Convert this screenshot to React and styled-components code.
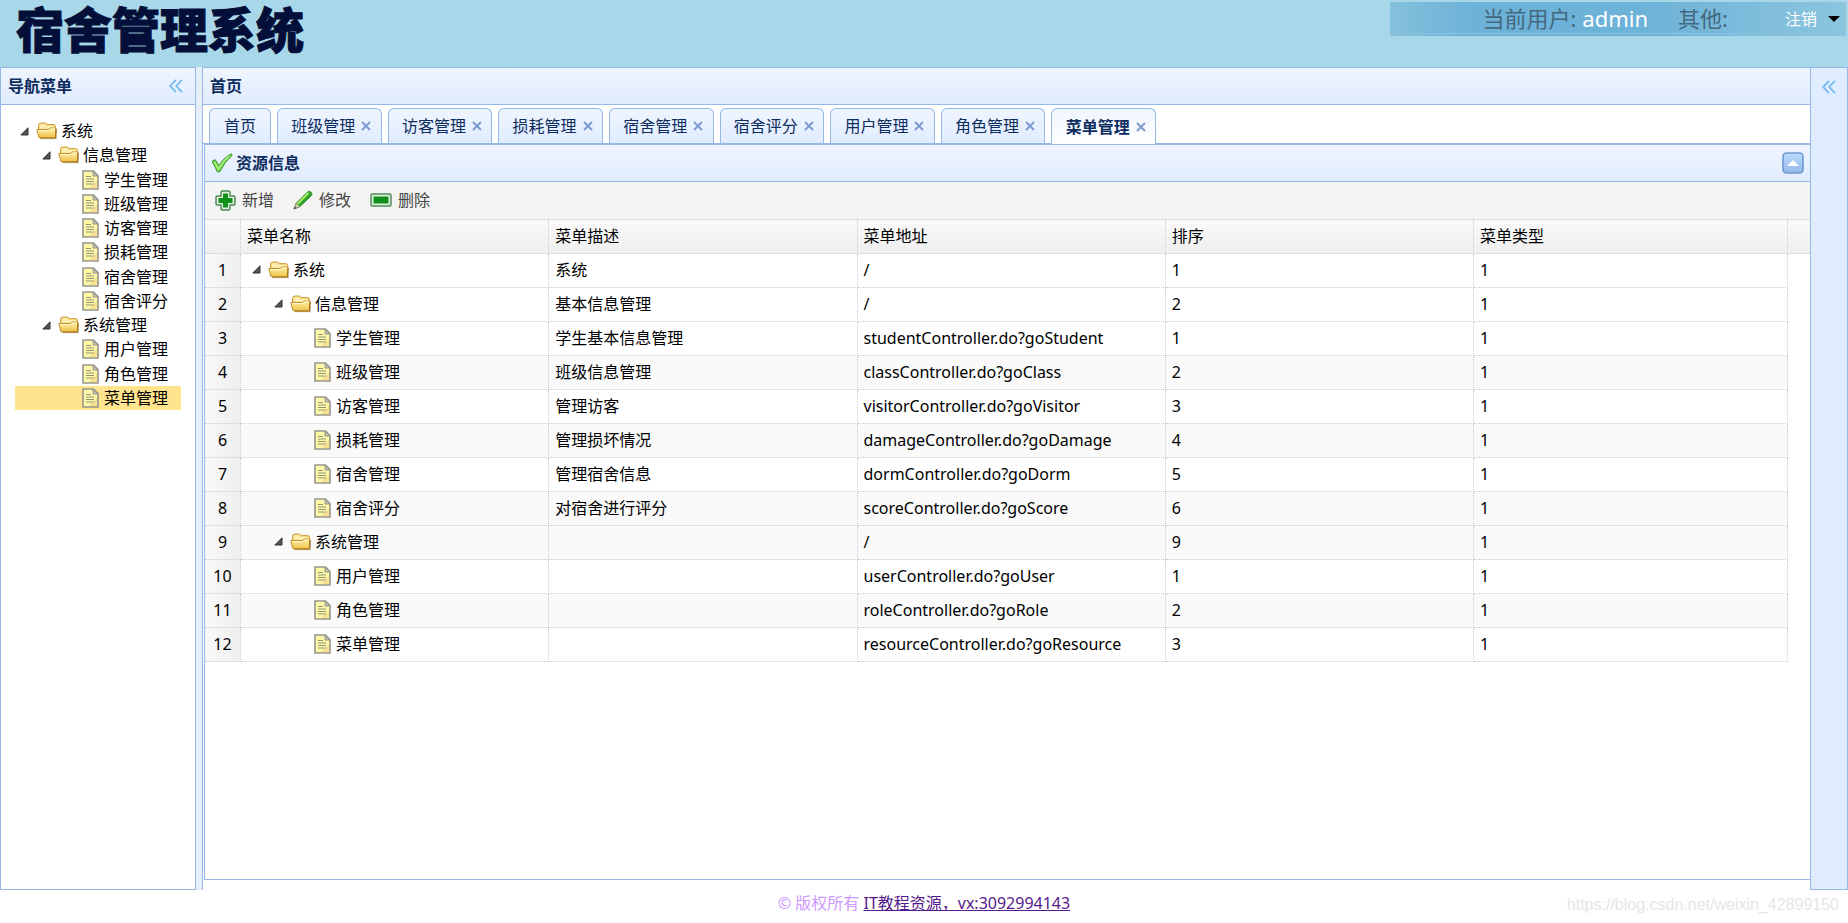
import React, { useState } from "react";
import styled, { createGlobalStyle, css } from "styled-components";

const line = "#95b8e7";
const navy = "#0e2d5f";
const sans = '"Noto Sans", "Noto Sans CJK SC", sans-serif';

const GlobalStyle = createGlobalStyle`
  * { box-sizing: border-box; }
  html, body, #root { height: 100%; }
  body { margin: 0; background: #fff; color: #000; font: 16px/24px ${sans}; }
  button { font: inherit; color: inherit; background: none; border: 0; padding: 0; cursor: pointer; }
  ul { list-style: none; margin: 0; padding: 0; }
`;

const Page = styled.div`
  min-height: 100%;
  display: flex;
  flex-direction: column;
`;

const Header = styled.header`
  height: 67px;
  flex: none;
  display: flex;
  justify-content: space-between;
  background: #a8d7e9;
`;

const Logo = styled.h1`
  margin: 0;
  padding: 0 16px;
  font-size: 48px;
  line-height: 60px;
  font-weight: 900;
  color: #030f38;
  -webkit-text-stroke: 1px #030f38;
`;

const UserBar = styled.div`
  width: 456px;
  height: 34px;
  margin: 2px 2px 0 0;
  padding-right: 6px;
  display: flex;
  justify-content: flex-end;
  align-items: flex-start;
  line-height: 32px;
  font-size: 22px;
  color: #44697f;
  white-space: pre;
  background:
    linear-gradient(#8cc4e0, #8cc4e0) 0 31px / 100% 1px no-repeat,
    linear-gradient(90deg, #84c1dc 0, #6db2d8 18%, #6db2d8 55%, #8bc5de 100%);
`;

const UserName = styled.span`
  color: #fff;
  margin: 0 30px 0 6px;
`;

const Logout = styled.button`
  display: flex;
  align-items: center;
  gap: 11px;
  height: 34px;
  margin-left: 57px;
  && { color: #fff; font-size: 16px; }
`;

const Body = styled.div`
  flex: 1;
  display: flex;
`;

const West = styled.aside`
  width: 196px;
  flex: none;
  border: 1px solid ${line};
`;

const Splitter = styled.div`
  width: 6px;
  flex: none;
  background: #e6eef8;
`;

const Center = styled.main`
  flex: 1;
  min-width: 0;
  display: flex;
  flex-direction: column;
  border: solid ${line};
  border-width: 1px 0 0 1px;
  padding-bottom: 10px;
`;

const East = styled.aside`
  width: 38px;
  flex: none;
  border: 1px solid ${line};
  background: #e0ecff;
  display: flex;
  justify-content: center;
  align-items: flex-start;
  padding: 12px 2px 0;
`;

const PanelHeader = styled.div`
  height: 37px;
  flex: none;
  display: flex;
  align-items: center;
  gap: 3px;
  padding: ${(p) => (p.$inner ? "0 6px" : "0 12px 0 7px")};
  border-bottom: 1px solid ${line};
  background: linear-gradient(#eff5ff, #e0ecff);
  color: ${navy};
`;

const PanelTitle = styled.h2`
  margin: 0;
  flex: 1;
  font-size: 16px;
  line-height: 24px;
  font-weight: 700;
`;

const IconButton = styled.button`
  display: flex;
`;

const Tree = styled.ul`
  margin: 14px;
  height: 291px;
  display: grid;
  grid-auto-rows: 1fr;
`;

const TreeItem = styled.li`
  display: flex;
  align-items: center;
  padding-left: ${(p) => p.$indent}px;
  background: ${(p) => (p.$selected ? "#ffe48d" : "transparent")};
  white-space: nowrap;
`;

const Node = styled.span`
  display: flex;
  align-items: center;
  padding-left: ${(p) => p.$indent}px;
`;

const NodeIcon = styled.span`
  display: flex;
  width: ${(p) => p.$w}px;
  flex: none;
`;

const TabStrip = styled.div`
  flex: none;
  padding: 3px 0 0 6px;
  height: 39px;
  border-bottom: 1px solid ${line};
`;

const Tabs = styled.div`
  width: 947px;
  display: flex;
  gap: 6px;
`;

const Tab = styled.div`
  flex: ${(p) => (p.$fixed ? "none" : "1 1 0")};
  width: ${(p) => (p.$fixed ? "62px" : "auto")};
  height: ${(p) => (p.$active ? 36 : 35)}px;
  padding-left: ${(p) => (p.$fixed ? 0 : 4)}px;
  display: flex;
  align-items: center;
  justify-content: center;
  gap: 6px;
  border: 1px solid ${line};
  border-bottom: 0;
  border-radius: 6px 6px 0 0;
  background: linear-gradient(#eff5ff, ${(p) => (p.$active ? "#fff" : "#e0ecff")});
  color: ${navy};
  white-space: nowrap;
  ${(p) => p.$active && css`font-weight: 700;`}
`;

const Panel = styled.section`
  flex: 1;
  margin-left: 1px;
  border: solid ${line};
  border-width: 1px 0 1px 1px;
`;

const Toolbar = styled.div`
  height: 38px;
  display: flex;
  align-items: center;
  gap: 19px;
  padding: 0 10px 1px;
  background: #f4f4f4;
  border-bottom: 1px solid #ddd;
`;

const Tool = styled.button`
  display: flex;
  align-items: center;
  gap: 6px;
  && { color: #444; }
`;

const Grid = styled.table`
  width: 100%;
  table-layout: fixed;
  border-collapse: separate;
  border-spacing: 0;
`;

const Col = styled.col`
  width: ${(p) => (p.$w ? `${p.$w}px` : "auto")};
`;

const HeadCell = styled.th`
  height: 34px;
  padding: 0 6px 2px;
  text-align: left;
  font-weight: 400;
  background: linear-gradient(#f9f9f9, #efefef);
  border-bottom: 1px solid #ddd;
  border-right: ${(p) => (p.$last ? "0" : "1px dotted #ccc")};
`;

const Cell = styled.td`
  height: 34px;
  padding: 0 6px 2px;
  white-space: nowrap;
  background: ${(p) => (p.$striped ? "#fafafa" : "#fff")};
  border: dotted #ccc;
  border-width: 0 1px 1px 0;
`;

const NumberCell = styled(Cell)`
  text-align: center;
  background: linear-gradient(90deg, #f9f9f9, #efefef);
`;

const Footer = styled.footer`
  height: 33px;
  flex: none;
  display: grid;
  grid-template-columns: 1fr auto 1fr;
  align-items: start;
  line-height: 26px;
  color: #cc99ff;
`;

const Copyright = styled.span`
  grid-column: 2;
  a { color: #551a8b; }
`;

const SiteAddress = styled.span`
  justify-self: end;
  padding-right: 9px;
  font: 16px/30px "Liberation Sans", sans-serif;
  color: #e6e6e6;
`;

const Arrows = () => (
  <svg width="14" height="14" viewBox="0 0 14 14" fill="none" stroke="#74b9ef" strokeWidth="1.8" aria-hidden="true">
    <path d="M7 .8 1.2 7 7 13.2M13 .8 7.2 7 13 13.2" />
  </svg>
);

const Expander = () => (
  <svg width="9" height="9" viewBox="0 0 9 9" aria-hidden="true">
    <path d="M8 .8V8H.8z" fill="#555" stroke="#333" strokeLinejoin="round" />
  </svg>
);

const Folder = () => (
  <svg width="22" height="18" viewBox="0 0 22 18" aria-hidden="true">
    <defs>
      <linearGradient id="folder" x2="0" y2="1">
        <stop stopColor="#fff3a8" />
        <stop offset="1" stopColor="#eebf4a" />
      </linearGradient>
    </defs>
    <path d="M4 17.200h17V7H5z" fill="#888" opacity=".4" />
    <path d="M2.500 15V3.200Q2.500 1 5 1h4q1.600 0 2.200 1.500H17q2.500 0 2.500 2V15z" fill="#f6d87c" stroke="#cfa044" />
    <path d="M4 6.500V3.500Q4 2.300 5.500 2.300H8.500q1.200 0 1.600 1.700H18v3z" fill="#fdeeb4" />
    <path d="M.8 7.500h11.700l1.500-1.500h6l-.5 10H4.500Q3 16 2.500 14z" fill="url(#folder)" stroke="#c2902c" strokeLinejoin="round" />
    <path d="M2.300 8.500h10.700l1.500-1.500h4.500" fill="none" stroke="#fffbd6" />
    <path d="M4.500 16h15l.5-9" fill="none" stroke="#a87518" strokeWidth="1.200" />
  </svg>
);

const FileIcon = () => (
  <svg width="17" height="20" viewBox="0 0 17 20" aria-hidden="true">
    <path d="M1 1h10.500L16 5.500V19H1z" fill="#fdf9a4" stroke="#96968e" strokeWidth="1.600" />
    <path d="M15 10v8H7z" fill="#f7cf86" opacity=".6" />
    <path d="M11 1.500V6h4.500z" fill="#c9c9bf" stroke="#96968e" />
    <path d="M4 6.500h5M4 9h8M4 11.500h8M4 14h8" stroke="#94947c" strokeWidth="1.200" />
  </svg>
);

const CloseIcon = () => (
  <svg width="10" height="10" viewBox="0 0 10 10" stroke="#7d9bd0" strokeWidth="2" aria-hidden="true">
    <path d="m1 1 8 8M9 1 1 9" />
  </svg>
);

const Check = () => (
  <svg width="22" height="20" viewBox="0 0 22 20" aria-hidden="true">
    <path d="M1 8.500 4 6.500 8 12.500Q13 4 20.500.8L21 2.500Q13.500 9 9 18.500 7.500 19.500 6 18.500 3.500 12 1 8.500Z" fill="#6fd545" stroke="#3c9a3a" />
    <path d="M3.500 9 7.500 16Q12 8 18 3" fill="none" stroke="#b4f08e" strokeWidth="1.500" />
  </svg>
);

const AddIcon = () => (
  <svg width="21" height="21" viewBox="0 0 21 21" aria-hidden="true">
    <path d="M7 1h7l1 1v4h4l1 1v7l-1 1h-4v4l-1 1H7l-1-1v-4H2l-1-1V7l1-1h4V2z" fill="#e3f1e0" stroke="#4d8956" strokeWidth="1.500" />
    <path d="M8 3.500h5V8h4.500v5H13v4.500H8V13H3.500V8H8z" fill="#109018" />
  </svg>
);

const EditIcon = () => (
  <svg width="20" height="20" viewBox="0 0 20 20" aria-hidden="true">
    <path d="M1 19 3 13.500 14 2.500Q15.500.8 17 1.500L18.800 3Q19.500 4 18 6L7 16.500z" fill="#2fa526" stroke="#3b8c3a" strokeLinejoin="round" />
    <path d="M4.500 14 15.500 3" stroke="#a6ec68" strokeWidth="2" />
    <path d="M1 19 3 13.500 7 16.500z" fill="#d8d2b4" stroke="#7d8d74" strokeWidth=".7" />
    <path d="m1 19 1-2.500L3.500 18z" fill="#444" />
  </svg>
);

const RemoveIcon = () => (
  <svg width="22" height="14" viewBox="0 0 22 14" aria-hidden="true">
    <rect x="1" y="1" width="20" height="12" rx="1.500" fill="#e3f1e0" stroke="#4d8956" strokeWidth="1.500" />
    <path d="M3.500 3.500h15v7h-15z" fill="#109018" />
  </svg>
);

const CollapseIcon = () => (
  <svg width="22" height="22" viewBox="0 0 22 22" aria-hidden="true">
    <defs>
      <linearGradient id="collapse" x2="0" y2="1">
        <stop stopColor="#bcd9fb" />
        <stop offset="1" stopColor="#94b8ec" />
      </linearGradient>
    </defs>
    <rect x="1" y="1" width="20" height="20" rx="3.500" fill="url(#collapse)" stroke="#6e9ad2" strokeWidth="1.600" />
    <path d="M5 14h12l-6-6z" fill="#fff" />
  </svg>
);

const Caret = () => (
  <svg width="12" height="6" viewBox="0 0 12 6" aria-hidden="true">
    <path d="M0 0h12L6 6z" />
  </svg>
);

const resources = [
  [0, "系统", "系统", "/", 1],
  [1, "信息管理", "基本信息管理", "/", 2],
  [2, "学生管理", "学生基本信息管理", "studentController.do?goStudent", 1],
  [2, "班级管理", "班级信息管理", "classController.do?goClass", 2],
  [2, "访客管理", "管理访客", "visitorController.do?goVisitor", 3],
  [2, "损耗管理", "管理损坏情况", "damageController.do?goDamage", 4],
  [2, "宿舍管理", "管理宿舍信息", "dormController.do?goDorm", 5],
  [2, "宿舍评分", "对宿舍进行评分", "scoreController.do?goScore", 6],
  [1, "系统管理", "", "/", 9],
  [2, "用户管理", "", "userController.do?goUser", 1],
  [2, "角色管理", "", "roleController.do?goRole", 2],
  [2, "菜单管理", "", "resourceController.do?goResource", 3],
];

const striped = [4, 6, 8, 9, 11];
const tabNames = ["首页", "班级管理", "访客管理", "损耗管理", "宿舍管理", "宿舍评分", "用户管理", "角色管理", "菜单管理"];
const indents = [5, 27, 67];

const NodeContent = ({ level, label }) =>
  level < 2 ? (
    <>
      <NodeIcon $w={16}><Expander /></NodeIcon>
      <NodeIcon $w={25}><Folder /></NodeIcon>
      <span>{label}</span>
    </>
  ) : (
    <>
      <NodeIcon $w={22}><FileIcon /></NodeIcon>
      <span>{label}</span>
    </>
  );

export default function App() {
  const [active, setActive] = useState("菜单管理");
  return (
    <Page>
      <GlobalStyle />
      <Header>
        <Logo>宿舍管理系统</Logo>
        <UserBar>
          <span>当前用户:</span>
          <UserName>admin</UserName>
          <span>其他:</span>
          <Logout type="button">注销<Caret /></Logout>
        </UserBar>
      </Header>
      <Body>
        <West>
          <PanelHeader>
            <PanelTitle>导航菜单</PanelTitle>
            <IconButton type="button" aria-label="折叠"><Arrows /></IconButton>
          </PanelHeader>
          <Tree>
            {resources.map(([level, label]) => (
              <TreeItem key={label} $indent={indents[level]} $selected={label === active}>
                <NodeContent level={level} label={label} />
              </TreeItem>
            ))}
          </Tree>
        </West>
        <Splitter />
        <Center>
          <PanelHeader>
            <PanelTitle>首页</PanelTitle>
          </PanelHeader>
          <TabStrip>
            <Tabs>
              {tabNames.map((name, i) => (
                <Tab key={name} $fixed={i === 0} $active={name === active}>
                  <button type="button" onClick={() => setActive(name)}>{name}</button>
                  {i > 0 && <IconButton type="button" aria-label={`关闭${name}`}><CloseIcon /></IconButton>}
                </Tab>
              ))}
            </Tabs>
          </TabStrip>
          <Panel>
            <PanelHeader $inner>
              <Check />
              <PanelTitle>资源信息</PanelTitle>
              <IconButton type="button" aria-label="收起"><CollapseIcon /></IconButton>
            </PanelHeader>
            <Toolbar>
              <Tool type="button"><AddIcon />新增</Tool>
              <Tool type="button"><EditIcon />修改</Tool>
              <Tool type="button"><RemoveIcon />删除</Tool>
            </Toolbar>
            <Grid>
              <colgroup>
                <Col $w={36} />
                <Col /><Col /><Col /><Col />
                <Col $w={314} />
                <Col $w={22} />
              </colgroup>
              <thead>
                <tr>
                  <HeadCell />
                  <HeadCell>菜单名称</HeadCell>
                  <HeadCell>菜单描述</HeadCell>
                  <HeadCell>菜单地址</HeadCell>
                  <HeadCell>排序</HeadCell>
                  <HeadCell>菜单类型</HeadCell>
                  <HeadCell $last />
                </tr>
              </thead>
              <tbody>
                {resources.map(([level, label, note, url, order], i) => {
                  const s = striped.includes(i + 1);
                  return (
                    <tr key={label}>
                      <NumberCell>{i + 1}</NumberCell>
                      <Cell $striped={s}>
                        <Node $indent={indents[level]}><NodeContent level={level} label={label} /></Node>
                      </Cell>
                      <Cell $striped={s}>{note}</Cell>
                      <Cell $striped={s}>{url}</Cell>
                      <Cell $striped={s}>{order}</Cell>
                      <Cell $striped={s}>1</Cell>
                    </tr>
                  );
                })}
              </tbody>
            </Grid>
          </Panel>
        </Center>
        <East>
          <IconButton type="button" aria-label="展开"><Arrows /></IconButton>
        </East>
      </Body>
      <Footer>
        <Copyright>© 版权所有 <a href="#contact">IT教程资源，vx:3092994143</a></Copyright>
        <SiteAddress>https://blog.csdn.net/weixin_42899150</SiteAddress>
      </Footer>
    </Page>
  );
}
